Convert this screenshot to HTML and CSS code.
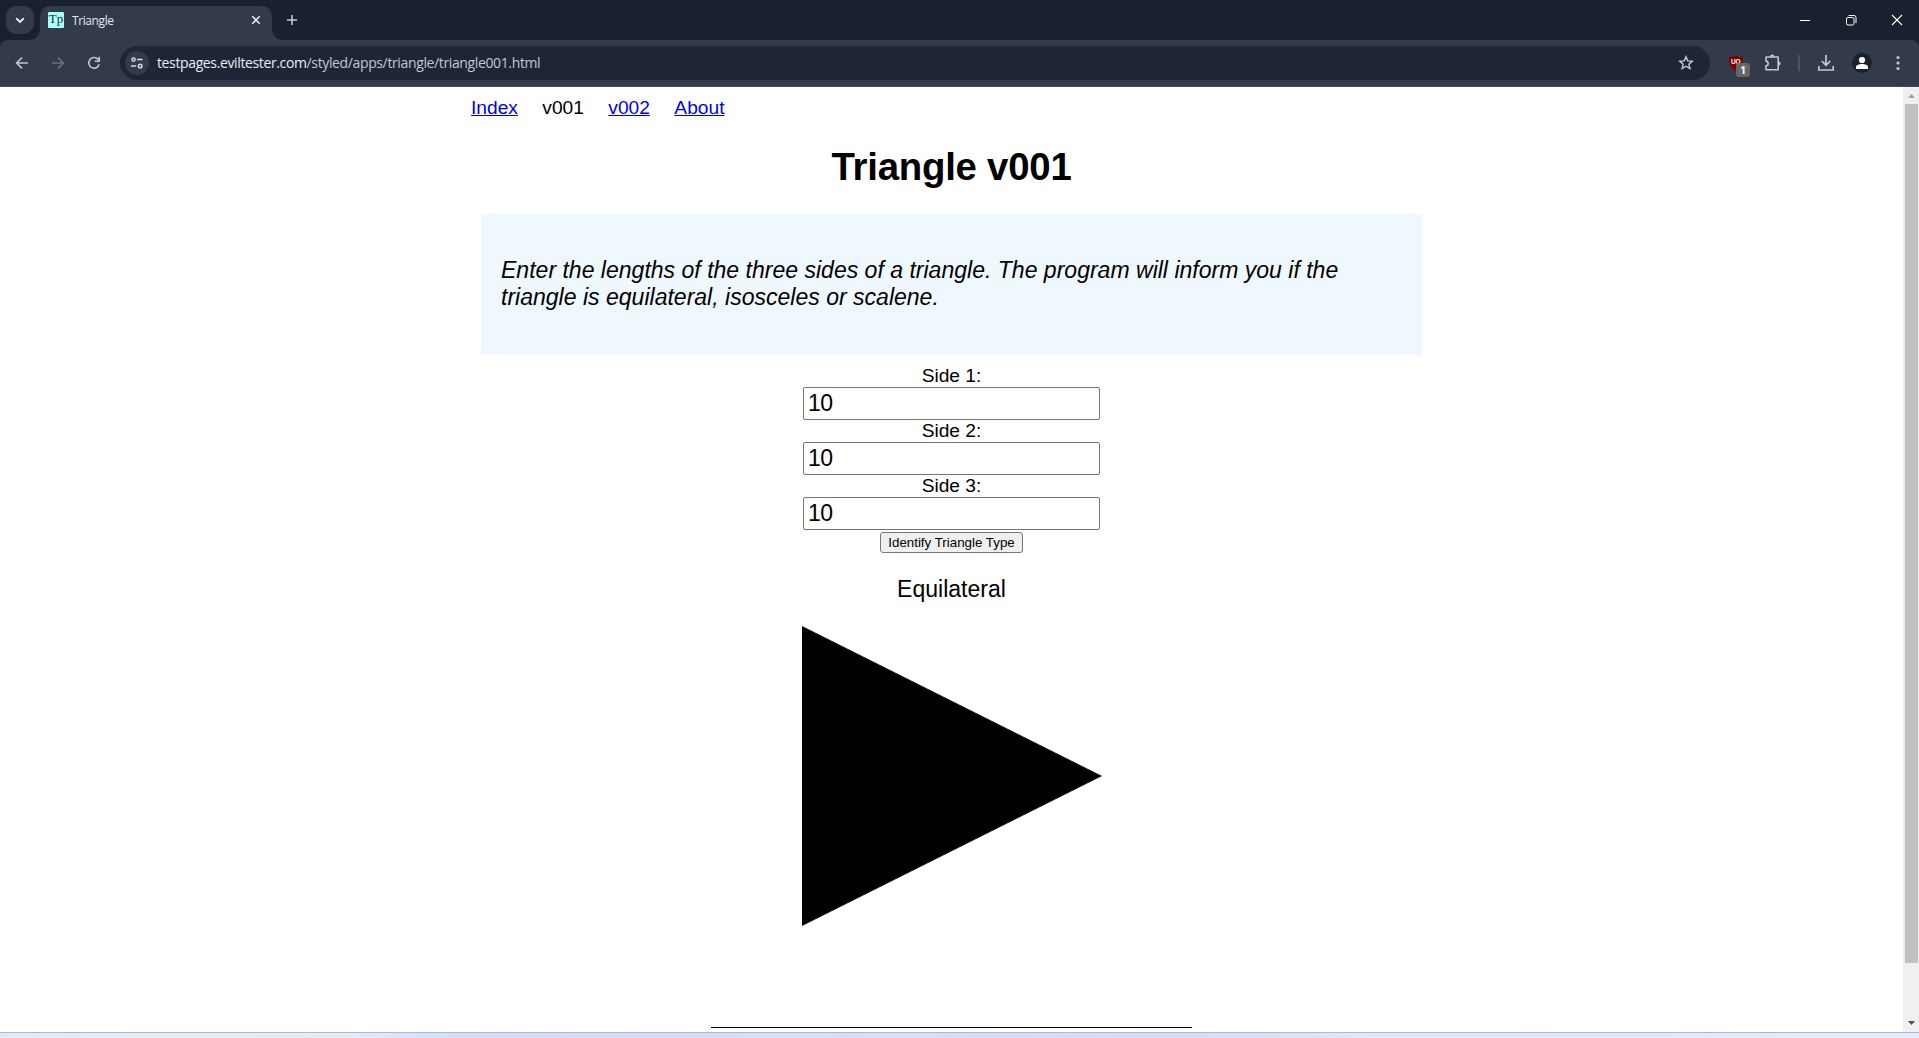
FILE: index.html
```html
<!DOCTYPE html>
<html lang="en">
<head>
<meta charset="utf-8">
<title>Triangle</title>
<link rel="stylesheet" href="styles.css">
</head>
<body>
<div class="window">
  <header class="tabstrip">
    <button class="tab-search" aria-label="Search tabs"><svg width="28" height="28" viewBox="0 0 28 28"><path d="M10.2 12.3l3.8 3.7 3.8-3.7" fill="none" stroke="#e6eaf2" stroke-width="1.9"/></svg></button>
    <div class="tab">
      <span class="favicon">Tp</span>
      <span class="tab-title">Triangle</span>
      <svg class="tab-close" width="10" height="10" viewBox="0 0 10 10"><path d="M1.3 1.3l7.4 7.4M8.7 1.3l-7.4 7.4" stroke="#e3e7ef" stroke-width="1.6"/></svg>
    </div>
    <svg class="new-tab" width="12" height="12" viewBox="0 0 12 12"><path d="M6 1v10M1 6h10" stroke="#b9c8e2" stroke-width="1.6"/></svg>
    <div class="window-buttons">
      <svg width="12" height="12" viewBox="0 0 12 12"><path d="M1 6.5h10" stroke="#fff"/></svg>
      <svg width="12" height="12" viewBox="0 0 12 12"><rect x="1.5" y="3.5" width="7.5" height="7.5" rx="1.5" fill="none" stroke="#fff"/><path d="M3.5 1.5H9a2 2 0 0 1 2 2V9" fill="none" stroke="#fff"/></svg>
      <svg width="12" height="12" viewBox="0 0 12 12"><path d="M1 1l10 10M11 1L1 11" stroke="#fff" stroke-width="1.1"/></svg>
    </div>
  </header>

  <div class="toolbar">
    <div class="nav-buttons">
      <svg width="16" height="16" viewBox="0 0 16 16"><path d="M14 8H3M8 2.6L2.6 8 8 13.4" fill="none" stroke="#b9c8e2" stroke-width="1.6"/></svg>
      <svg width="16" height="16" viewBox="0 0 16 16"><path d="M2 8h11M8 2.6L13.4 8 8 13.4" fill="none" stroke="#6c7483" stroke-width="1.6"/></svg>
      <svg width="16" height="16" viewBox="0 0 16 16"><path d="M13.2 9.2A5.3 5.3 0 1 1 12 4.3l1 1" fill="none" stroke="#b9c8e2" stroke-width="1.6"/><path d="M13.2 1.8v4.4H8.8" fill="none" stroke="#b9c8e2" stroke-width="1.6"/></svg>
    </div>
    <div class="omnibox">
      <span class="site-info"><svg width="14" height="14" viewBox="0 0 14 14" fill="none" stroke="#d5dae4" stroke-width="1.5"><circle cx="3.5" cy="3.6" r="1.6"/><path d="M7 3.6h5.5M1 10h5.2"/><circle cx="10.2" cy="10" r="1.8"/></svg></span>
      <span class="url">testpages.eviltester.com<span class="url-path">/styled/apps/triangle/triangle001.html</span></span>
      <svg class="star" width="16" height="16" viewBox="0 0 16 16"><path d="M8 1.7l1.75 4.15 4.5.4-3.4 2.95 1.05 4.4L8 11.25 4.1 13.6l1.05-4.4-3.4-2.95 4.5-.4z" fill="none" stroke="#c7cbd3" stroke-width="1.4"/></svg>
    </div>
    <div class="extensions">
      <div class="blocker">
        <svg width="16" height="16" viewBox="0 0 16 16"><path d="M8 .3c2 1.3 4 1.8 7 1.8 0 7-.4 10.300-7 13.700C1.400 12.400 1 9.100 1 2.100c3 0 5-.5 7-1.800z" fill="#800000"/><text x="7.800" y="9" font-size="6.500" font-weight="700" text-anchor="middle" fill="#fff" font-family="Liberation Sans, sans-serif">UO</text></svg>
        <span class="badge">1</span>
      </div>
      <svg class="puzzle" width="18" height="18" viewBox="0 0 18 18"><path d="M2 3h12.200v12.800H2v-3.900c2.900-.4 2.900-4.400 0-4.800z" fill="none" stroke="#b9c8e2" stroke-width="1.600" stroke-linejoin="round"/><path d="M6 2.800a2.200 2.200 0 0 1 4.400 0zM14.400 7.200a2.200 2.200 0 0 1 0 4.400z" fill="#b9c8e2"/></svg>
      <span class="divider"></span>
      <svg class="download" width="18" height="18" viewBox="0 0 18 18"><path d="M9 1v10M4.800 7L9 11.200 13.200 7M1.800 12v4h14.400v-4" fill="none" stroke="#b9c8e2" stroke-width="1.700"/></svg>
      <svg class="profile" width="20" height="20" viewBox="0 0 20 20"><circle cx="10" cy="10" r="10" fill="#192131"/><circle cx="10" cy="7" r="3.100" fill="#fff"/><path d="M4 16v-2c0-2 3-3.100 6-3.100s6 1.100 6 3.100v2z" fill="#fff"/></svg>
      <svg class="menu" width="4" height="16" viewBox="0 0 4 16" fill="#b9c8e2"><circle cx="2" cy="2.500" r="1.600"/><circle cx="2" cy="8" r="1.600"/><circle cx="2" cy="13.500" r="1.600"/></svg>
    </div>
  </div>

  <div class="viewport">
    <main class="page">
      <nav class="site-nav"><a href="#">Index</a><span>v001</span><a href="#">v002</a><a href="#">About</a></nav>
      <h1>Triangle v001</h1>
      <section class="explanation"><p>Enter the lengths of the three sides of a triangle. The program will inform you if the triangle is equilateral, isosceles or scalene.</p></section>
      <form class="sides">
        <label for="side1">Side 1:</label><input id="side1" type="text" value="10">
        <label for="side2">Side 2:</label><input id="side2" type="text" value="10">
        <label for="side3">Side 3:</label><input id="side3" type="text" value="10">
        <button class="identify" type="button">Identify Triangle Type</button>
      </form>
      <p class="answer">Equilateral</p>
      <svg class="drawing" width="300" height="300" viewBox="0 0 300 300"><path d="M0 0l300 150L0 300z"/></svg>
      <hr class="rule">
    </main>
    <div class="scrollbar">
      <svg width="16" height="17" viewBox="0 0 16 17"><path d="M5 11l3.500-4 3.500 4z" fill="#a3a3a3"/></svg>
      <div class="thumb"></div>
      <svg width="16" height="17" viewBox="0 0 16 17"><path d="M5 6h7l-3.500 4z" fill="#505050"/></svg>
    </div>
  </div>
  <div class="desktop-edge"></div>
</div>
</body>
</html>
```
FILE: styles.css
```css
* { box-sizing: border-box; }
html, body { margin: 0; height: 100%; overflow: hidden; }
svg { display: block; flex: none; }

.window {
  display: flex;
  flex-direction: column;
  width: 1919px;
  height: 1038px;
  font-family: "Liberation Sans", Arial, sans-serif;
  background: #192131;
}

/* Tab strip */
.tabstrip {
  display: flex;
  flex: none;
  height: 40px;
  padding-left: 6px;
}
.tab-search {
  width: 28px;
  height: 28px;
  margin: 6px 6px 0 0;
  padding: 0;
  border: 0;
  border-radius: 10px;
  background: #333b4b;
}
.tab {
  position: relative;
  display: flex;
  align-items: center;
  width: 232px;
  height: 34px;
  margin-top: 6px;
  padding: 0 11px 6px 8px;
  border-radius: 10px 10px 0 0;
  background: #333b4b;
}
.tab::before, .tab::after {
  content: "";
  position: absolute;
  bottom: 0;
  width: 10px;
  height: 10px;
}
.tab::before { left: -10px; background: radial-gradient(circle at 0 0, #192131 9.500px, #333b4b 10px); }
.tab::after { right: -10px; background: radial-gradient(circle at 100% 0, #192131 9.500px, #333b4b 10px); }
.favicon {
  width: 16px;
  height: 16px;
  border-radius: 1px;
  background: #aff;
  color: #1c2a2e;
  font: 13px/14px "Liberation Serif", serif;
  text-align: center;
}
.tab-title {
  flex: 1;
  margin-left: 8px;
  padding-top: 1px;
  color: #e3e7ef;
  font: 12px/16px "Open Sans", sans-serif;
  letter-spacing: -0.400px;
}
.new-tab { margin: 14px 0 0 14px; }
.window-buttons {
  display: flex;
  gap: 34px;
  margin: 14px 16px 0 auto;
}

/* Toolbar */
.toolbar {
  display: flex;
  flex: none;
  align-items: center;
  height: 47px;
  padding: 0 3px 1px 14px;
  border-bottom: 1px solid #444b59;
  border-radius: 8px 8px 0 0;
  background: #333b4b;
}
.nav-buttons { display: flex; gap: 20px; }
.omnibox {
  display: flex;
  align-items: center;
  width: 1590px;
  height: 34px;
  margin-left: 18px;
  padding: 0 16px 0 5px;
  border-radius: 17px;
  background: #1e2636;
}
.site-info {
  display: grid;
  place-items: center;
  width: 24px;
  height: 24px;
  border-radius: 50%;
  background: #333b4b;
}
.url {
  flex: 1;
  margin-left: 8px;
  color: #e9ecf2;
  font: 14px/20px "Open Sans", sans-serif;
  letter-spacing: -0.370px;
}
.url-path { color: #c2c6ce; }
.extensions {
  display: flex;
  align-items: center;
  margin-left: 18px;
}
.blocker { position: relative; }
.badge {
  position: absolute;
  left: 8px;
  top: 8px;
  width: 14px;
  height: 14px;
  border-radius: 3px;
  background: #666;
  color: #fff;
  font: 700 10px/14px "Open Sans", sans-serif;
  text-align: center;
}
.puzzle { margin-left: 20px; }
.divider { width: 2px; height: 16px; margin-left: 16px; background: #4b5363; }
.download { margin-left: 17px; }
.profile { margin-left: 17px; }
.menu { margin-left: 24px; }

/* Page */
.viewport { display: flex; flex: 1; min-height: 0; overflow: hidden; background: #fff; }
.page {
  display: flex;
  flex-direction: column;
  align-items: center;
  width: 961px;
  margin: 0 auto;
  font-size: 19.200px;
  color: #000;
}
.site-nav {
  display: flex;
  align-self: stretch;
  gap: 24.400px;
  height: 22px;
  margin-top: 10px;
  line-height: 22px;
}
.site-nav a { color: #00e; text-underline-offset: 1px; text-decoration-thickness: 1px; }
h1 { margin: 26px 0; font-size: 38.400px; line-height: 43px; letter-spacing: -0.250px; }
.explanation {
  width: 941px;
  height: 141px;
  padding: 43px 20px 0;
  background: #eff7ff;
  font-size: 23.040px;
  font-style: italic;
  line-height: 27px;
}
.explanation p { margin: 0; }
.sides {
  display: flex;
  flex-direction: column;
  align-items: center;
  margin-top: 10px;
}
.sides label { height: 22px; line-height: 22px; }
.sides input {
  width: 297px;
  height: 33px;
  padding: 1px 4px;
  border: 1px solid #767676;
  border-radius: 2px;
  background: #fff;
  font: 23.040px "Liberation Sans", Arial, sans-serif;
  letter-spacing: -0.500px;
}
.identify {
  width: 143px;
  height: 21px;
  margin-top: 2px;
  padding: 0;
  border: 1px solid #767676;
  border-radius: 3px;
  background: #efefef;
  color: #000;
  font: 13.333px/19px "Liberation Sans", Arial, sans-serif;
  white-space: nowrap;
}
.answer { margin: 23px 0; font-size: 23.040px; line-height: 27px; }
.drawing { margin-left: 1px; }
.rule { width: 481px; margin: 101px 0 0; border: 0; border-top: 1px solid #000; }

/* Scrollbar */
.scrollbar {
  display: flex;
  flex-direction: column;
  width: 16px;
  background: #f0f0f0;
}
.scrollbar .thumb { width: 13px; height: 859px; margin: 0 1px 0 2px; background: #c1c1c1; }
.scrollbar svg:last-child { margin-top: auto; }

.desktop-edge {
  flex: none;
  height: 6px;
  border-top: 1px solid #b3bac3;
  background: linear-gradient(90deg, #e0ebf7 0, #e2edf8 350px, #d3e1fb 430px, #d6dcf5 560px, #d3e1fc 770px, #d8def5 1090px, #d3e0f8 1200px, #deebf8 1400px, #e0ecf8 100%);
}
```
